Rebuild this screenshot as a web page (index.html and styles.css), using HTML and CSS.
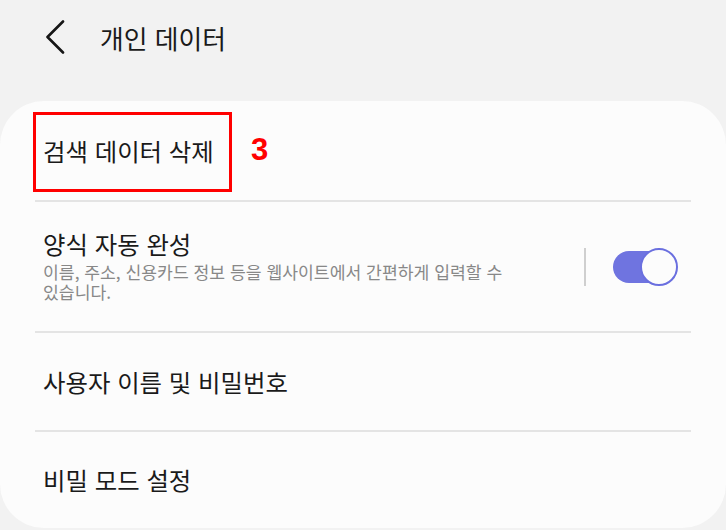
FILE: index.html
```html
<!DOCTYPE html>
<html lang="ko">
<head>
<meta charset="utf-8">
<title>개인 데이터</title>
<link rel="stylesheet" href="styles.css">
</head>
<body>
<header class="appbar">
  <svg class="back" width="20" height="34" viewBox="0 0 20 34" aria-hidden="true">
    <polyline points="18,1.5 2.5,17 18,32.5" fill="none" stroke="#161616" stroke-width="2.6" stroke-linecap="round" stroke-linejoin="round"/>
  </svg>
  <h1 class="appbar-title">개인 데이터</h1>
</header>
<main class="card">
  <ul class="list">
    <li class="row row-first">
      <span class="row-title">검색 데이터 삭제</span>
      <span class="mark-box"></span>
      <span class="mark-num">3</span>
    </li>
    <li class="row row-switch">
      <div class="row-text">
        <span class="row-title row-title-tight">양식 자동 완성</span>
        <span class="row-sub">이름, 주소, 신용카드 정보 등을 웹사이트에서 간편하게 입력할 수 있습니다.</span>
      </div>
      <span class="vsep"></span>
      <span class="toggle"><span class="toggle-track"></span><span class="toggle-thumb"></span></span>
    </li>
    <li class="row row-third">
      <span class="row-title">사용자 이름 및 비밀번호</span>
    </li>
    <li class="row row-last">
      <span class="row-title">비밀 모드 설정</span>
    </li>
  </ul>
</main>
</body>
</html>
```

FILE: styles.css
```css
* { box-sizing: border-box; }
html, body {
  margin: 0;
  padding: 0;
}
body {
  width: 726px;
  height: 530px;
  overflow: hidden;
  background: #f2f2f2;
  font-family: "Noto Sans CJK KR", "Noto Sans", sans-serif;
  color: #1a1a1a;
}
.appbar {
  height: 76px;
  display: flex;
  align-items: center;
  padding-left: 45px;
}
.back {
  display: block;
  margin-top: -2px;
}
.appbar-title {
  margin: 0 0 0 35px;
  font-size: 25.8px;
  font-weight: 400;
  line-height: 30px;
  color: #1a1a1a;
}
.card {
  margin-top: 25px;
  height: 427px;
  background: #fcfcfc;
  border-radius: 44px;
  overflow: hidden;
}
.list {
  list-style: none;
  margin: 0 35px;
  padding: 0;
}
.row {
  position: relative;
  display: flex;
  align-items: center;
  padding-left: 8px;
  border-bottom: 2px solid #e4e4e4;
}
.row-first { height: 101px; }
.row-switch { height: 131px; }
.row-third { height: 99px; }
.row-last { height: 96px; border-bottom: none; }
.row-title {
  font-size: 24.4px;
  line-height: 30px;
  color: #1a1a1a;
}
.row-title-tight {
  line-height: 26px;
}
.row-text {
  display: flex;
  flex-direction: column;
  width: 500px;
}
.row-sub {
  margin-top: 5px;
  font-size: 17.2px;
  line-height: 20px;
  color: #888888;
  word-break: keep-all;
}
.vsep {
  width: 2px;
  height: 38px;
  margin-left: 41px;
  background: #cfcfcf;
}
.toggle {
  position: relative;
  width: 65px;
  height: 38px;
  margin-left: 27px;
}
.toggle-track {
  position: absolute;
  left: 0;
  top: 3px;
  width: 58px;
  height: 32px;
  border-radius: 16px;
  background: #6f74e0;
}
.toggle-thumb {
  position: absolute;
  right: 0;
  top: 0;
  width: 38px;
  height: 38px;
  border-radius: 50%;
  background: #fcfcfc;
  border: 2.5px solid #6a6fdf;
}
.mark-box {
  position: absolute;
  left: -2px;
  top: 11px;
  width: 199px;
  height: 80px;
  border: 3px solid #ff0000;
}
.mark-num {
  position: absolute;
  left: 216px;
  top: 33px;
  font-family: "Liberation Sans", Arial, sans-serif;
  font-weight: 700;
  font-size: 31px;
  line-height: 31px;
  color: #ff0000;
}
```
